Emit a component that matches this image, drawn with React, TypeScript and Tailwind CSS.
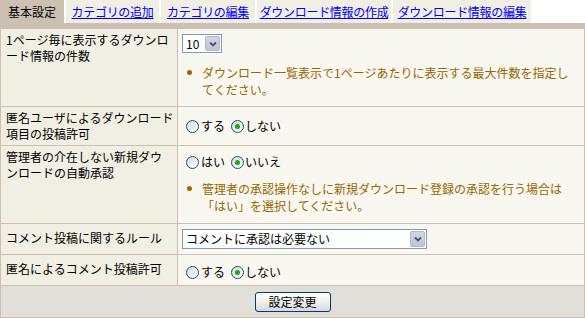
const jp = "font-['Noto_Sans_CJK_JP','Noto_Sans',sans-serif]";

function Radio({ checked }: { checked?: boolean }) {
  return (
    <span className="inline-flex h-[13px] w-[13px] shrink-0 items-center justify-center rounded-full border border-[#1c5180] bg-gradient-to-br from-[#d8d8d2] to-white">
      {checked && <span className="h-[5px] w-[5px] rounded-full bg-[#21a121]" />}
    </span>
  );
}

function RadioPair({ a, b }: { a: string; b: string }) {
  return (
    <div className="flex items-center h-[16px] text-[12px] leading-[16px]">
      <Radio />
      <span className="ml-[2px] mr-[6px]">{a}</span>
      <Radio checked />
      <span className="ml-[1px]">{b}</span>
    </div>
  );
}

function Arrow() {
  return (
    <span className="flex h-full w-[15px] items-center justify-center rounded-[2px] border border-[#b4b8cc] bg-gradient-to-b from-[#d4d6e6] to-[#bfc2d8]">
      <svg width="8" height="6" viewBox="0 0 8 6">
        <path d="M1 1.5 L4 4.5 L7 1.5" fill="none" stroke="#4d5068" strokeWidth="1.8" />
      </svg>
    </span>
  );
}

function Note({ children }: { children: React.ReactNode }) {
  return (
    <div className="flex text-[12px] leading-[17px] text-[#9a6700]">
      <span className="mt-[6px] ml-[5px] mr-[10px] h-[5px] w-[5px] shrink-0 rounded-full bg-[#9a6700]" />
      <span>{children}</span>
    </div>
  );
}

const tabs = [
  { label: "カテゴリの追加", w: "w-[93px]" },
  { label: "カテゴリの編集", w: "w-[94px]" },
  { label: "ダウンロード情報の作成", w: "w-[134px]" },
  { label: "ダウンロード情報の編集", w: "w-[138px]" },
];

const label = "bg-[#f1eee3] pl-[5px] text-[12px] leading-[16px]";

export default function App() {
  return (
    <div className={`w-[585px] h-[318px] bg-white text-black ${jp}`}>
      {/* tabs */}
      <div className="flex h-[23px] gap-[2px] text-[12px]">
        <div className="flex w-[64px] items-center justify-center bg-[#cdc0b2]">基本設定</div>
        {tabs.map((t) => (
          <div key={t.label} className={`flex ${t.w} items-center justify-center bg-[#f1eee4]`}>
            <a href="#" className="text-[#0000ff] underline tracking-[-0.3px]">{t.label}</a>
          </div>
        ))}
      </div>

      {/* settings table */}
      <div className="grid grid-cols-[176px_1fr] gap-px bg-[#cdc0b2] px-px pt-[6px] pb-px">
        <div className={`h-[77px] pt-[3px] ${label}`}>
          1ページ毎に表示するダウンロ<br />ード情報の件数
        </div>
        <div className="bg-[#f8f7f0] pl-[4px] pt-[5px]">
          <div className="flex h-[19px] w-[40px] items-center border border-[#7f9db9] bg-white p-px">
            <span className="flex-1 pl-[2px] text-[12px] leading-none">10</span>
            <Arrow />
          </div>
          <div className="mt-[11px]">
            <Note>
              ダウンロード一覧表示で1ページあたりに表示する最大件数を指定し<br />てください。
            </Note>
          </div>
        </div>

        <div className={`h-[38px] pt-[3px] ${label}`}>
          匿名ユーザによるダウンロード<br />項目の投稿許可
        </div>
        <div className="flex items-center bg-[#f8f7f0] pl-[8px]">
          <RadioPair a="する" b="しない" />
        </div>

        <div className={`h-[77px] pt-[3px] ${label}`}>
          管理者の介在しない新規ダウ<br />ンロードの自動承認
        </div>
        <div className="bg-[#f8f7f0] pl-[8px] pt-[8px]">
          <RadioPair a="はい" b="いいえ" />
          <div className="mt-[10px] -ml-[4px]">
            <Note>
              管理者の承認操作なしに新規ダウンロード登録の承認を行う場合は<br />「はい」を選択してください。
            </Note>
          </div>
        </div>

        <div className={`h-[30px] pt-[6px] ${label}`}>
          コメント投稿に関するルール
        </div>
        <div className="bg-[#f8f7f0] pl-[4px] pt-[5px]">
          <div className="flex h-[20px] w-[245px] items-center border border-[#7f9db9] bg-white p-px">
            <span className="flex-1 pl-[2px] text-[12px] leading-none">コメントに承認は必要ない</span>
            <Arrow />
          </div>
        </div>

        <div className={`h-[30px] pt-[6px] ${label}`}>
          匿名によるコメント投稿許可
        </div>
        <div className="bg-[#f8f7f0] pl-[8px] pt-[9px]">
          <RadioPair a="する" b="しない" />
        </div>

        <div className="col-span-2 flex h-[31px] justify-center bg-[#e2dfd8] pt-[6px]">
          <button className="h-[20px] w-[76px] rounded-[3px] border border-[#003c74] bg-gradient-to-b from-white via-[#f0f0ea] to-[#d6d6e4] text-[12px] leading-none">
            設定変更
          </button>
        </div>
      </div>
    </div>
  );
}
